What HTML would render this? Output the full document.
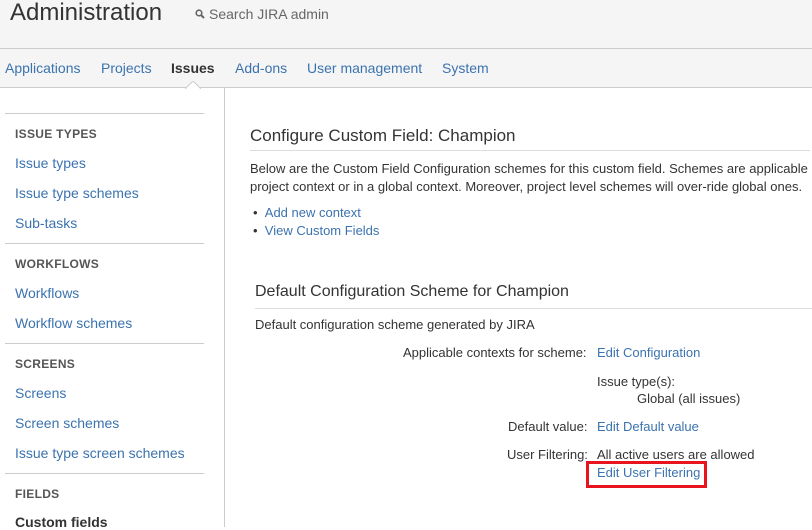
<!DOCTYPE html>
<html><head><meta charset="utf-8"><style>
*{margin:0;padding:0;box-sizing:border-box}
body{width:812px;height:527px;overflow:hidden;background:#fff;font-family:"Liberation Sans",Arial,sans-serif;font-size:14px;color:#333;position:relative}
.a{position:absolute;white-space:nowrap}
a,.l{color:#3b73af;text-decoration:none}
.hdr{position:absolute;left:0;top:0;width:812px;height:88px;background:#f5f5f5;border-bottom:1px solid #ccc}
.sep{position:absolute;left:0;top:48px;width:812px;height:1px;background:#ccc}
.sl{position:absolute;left:5px;width:199px;height:1px;background:#ccc}
.h{font-size:12px;font-weight:bold;color:#555;letter-spacing:.3px}
</style></head><body>
<div class="hdr"></div><div class="sep"></div>
<div class="a" style="left:10px;top:-1px;font-size:24px;color:#333">Administration</div>
<div class="a" style="left:195px;top:6px;font-size:14px;color:#666"><svg width="10" height="10" viewBox="0 0 10 10" style="margin-right:4px"><circle cx="4" cy="4" r="2.8" fill="none" stroke="#666" stroke-width="1.6"/><path d="M6 6l3 3" stroke="#666" stroke-width="2"/></svg>Search JIRA admin</div>
<div class="a l" style="left:5px;top:60px">Applications</div>
<div class="a l" style="left:101px;top:60px">Projects</div>
<div class="a" style="left:171px;top:60px;font-weight:bold;color:#333">Issues</div>
<div class="a l" style="left:235px;top:60px">Add-ons</div>
<div class="a l" style="left:307px;top:60px">User management</div>
<div class="a l" style="left:442px;top:60px">System</div>
<svg class="a" style="left:185px;top:81px" width="16" height="8"><path d="M0 8L8 0L16 8" fill="#fff" stroke="#ccc"/></svg>
<div class="a" style="left:224px;top:88px;width:1px;height:439px;background:#ccc"></div>
<div class="sl" style="top:113px"></div>
<div class="a h" style="left:15px;top:127px">ISSUE TYPES</div>
<div class="a l" style="left:15px;top:155px">Issue types</div>
<div class="a l" style="left:15px;top:185px">Issue type schemes</div>
<div class="a l" style="left:15px;top:215px">Sub-tasks</div>
<div class="sl" style="top:243px"></div>
<div class="a h" style="left:15px;top:257px">WORKFLOWS</div>
<div class="a l" style="left:15px;top:285px">Workflows</div>
<div class="a l" style="left:15px;top:315px">Workflow schemes</div>
<div class="sl" style="top:343px"></div>
<div class="a h" style="left:15px;top:357px">SCREENS</div>
<div class="a l" style="left:15px;top:385px">Screens</div>
<div class="a l" style="left:15px;top:415px">Screen schemes</div>
<div class="a l" style="left:15px;top:445px">Issue type screen schemes</div>
<div class="sl" style="top:473px"></div>
<div class="a h" style="left:15px;top:487px">FIELDS</div>
<div class="a" style="left:15px;top:514px;font-weight:bold">Custom fields</div>
<div class="a" style="left:250px;top:126px;font-size:17px">Configure Custom Field: Champion</div>
<div class="a" style="left:250px;top:150px;width:560px;height:1px;background:#ddd"></div>
<div class="a" style="left:250px;top:160px;line-height:18px;font-size:13px">Below are the Custom Field Configuration schemes for this custom field. Schemes are applicable<br>project context or in a global context. Moreover, project level schemes will over-ride global ones.</div>
<div class="a" style="left:253px;top:205px;font-size:13px">•&nbsp;&nbsp;<span class="l">Add new context</span></div>
<div class="a" style="left:253px;top:223px;font-size:13px">•&nbsp;&nbsp;<span class="l">View Custom Fields</span></div>
<div class="a" style="left:255px;top:283px;font-size:16px">Default Configuration Scheme for Champion</div>
<div class="a" style="left:255px;top:308px;width:557px;height:1px;background:#ddd"></div>
<div class="a" style="left:255px;top:317px;font-size:13px">Default configuration scheme generated by JIRA</div>
<div class="a" style="left:403px;top:345px;font-size:13px">Applicable contexts for scheme:</div>
<div class="a l" style="left:597px;top:345px;font-size:13px">Edit Configuration</div>
<div class="a" style="left:597px;top:374px;font-size:13px">Issue type(s):</div>
<div class="a" style="left:637px;top:391px;font-size:13px">Global (all issues)</div>
<div class="a" style="left:508px;top:419px;font-size:13px">Default value:</div>
<div class="a l" style="left:597px;top:419px;font-size:13px">Edit Default value</div>
<div class="a" style="left:507px;top:447px;font-size:13px">User Filtering:</div>
<div class="a" style="left:597px;top:447px;font-size:13px">All active users are allowed</div>
<div class="a l" style="left:597px;top:465px;font-size:13px">Edit User Filtering</div>
<div class="a" style="left:586px;top:461px;width:121px;height:27px;border:3px solid #e8141e"></div>
</body></html>
